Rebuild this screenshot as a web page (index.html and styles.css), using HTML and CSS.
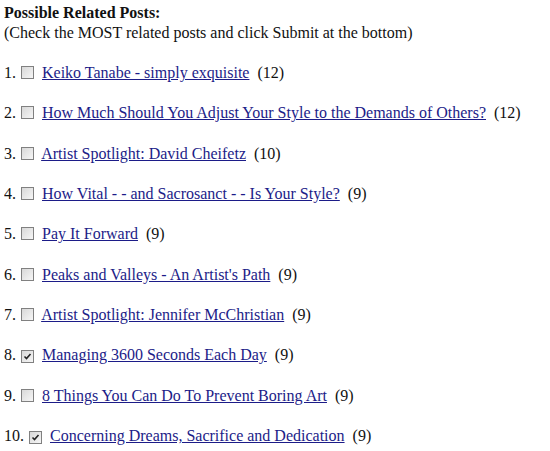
FILE: index.html
```html
<html>
<head>
<link rel="stylesheet" href="styles.css">
</head>
<body>

<div class="intro">
  <b>Possible Related Posts:</b><br />
  (Check the MOST related posts and click Submit at the bottom)
</div>

<div class="posts">
  <div class="post">1. <span class="box"></span> <a href="#">Keiko Tanabe - simply exquisite</a> <span class="count">(12)</span></div>
  <div class="post">2. <span class="box"></span> <a href="#">How Much Should You Adjust Your Style to the Demands of Others?</a> <span class="count">(12)</span></div>
  <div class="post">3. <span class="box"></span> <a href="#">Artist Spotlight: David Cheifetz</a> <span class="count">(10)</span></div>
  <div class="post">4. <span class="box"></span> <a href="#">How Vital - - and Sacrosanct - - Is Your Style?</a> <span class="count">(9)</span></div>
  <div class="post">5. <span class="box"></span> <a href="#">Pay It Forward</a> <span class="count">(9)</span></div>
  <div class="post">6. <span class="box"></span> <a href="#">Peaks and Valleys - An Artist's Path</a> <span class="count">(9)</span></div>
  <div class="post">7. <span class="box"></span> <a href="#">Artist Spotlight: Jennifer McChristian</a> <span class="count">(9)</span></div>
  <div class="post">8. <span class="box"><svg width="9" height="9" viewBox="0 0 9 9"><path d="M1.5 4.5 L3.5 6.5 L7.5 2" fill="none" stroke="#222" stroke-width="1.6"/></svg></span> <a href="#">Managing 3600 Seconds Each Day</a> <span class="count">(9)</span></div>
  <div class="post">9. <span class="box"></span> <a href="#">8 Things You Can Do To Prevent Boring Art</a> <span class="count">(9)</span></div>
  <div class="post">10. <span class="box"><svg width="9" height="9" viewBox="0 0 9 9"><path d="M1.5 4.5 L3.5 6.5 L7.5 2" fill="none" stroke="#222" stroke-width="1.6"/></svg></span> <a href="#">Concerning Dreams, Sacrifice and Dedication</a> <span class="count">(9)</span></div>
</div>

</body>
</html>
```

FILE: styles.css
```css
body {
	font-family: "Liberation Serif", "Times New Roman", serif;
	font-size: 16px;
	line-height: 20px;
	color: #111;
	background-color: #fff;
	margin: 3px 0 0 4px;
	}

.intro {
	margin-bottom: 20px;
}

.posts {
	display: flex;
	flex-direction: column;
	gap: 20.33px;
}

.post {
	white-space: nowrap;
}

.box {
	display: inline-flex;
	align-items: center;
	justify-content: center;
	box-sizing: border-box;
	width: 13px;
	height: 13px;
	border: 1px solid #808080;
	background: linear-gradient(135deg, #d8d8d8 0%, #f6f6f6 100%);
	vertical-align: -1px;
	margin: 0 4px 0 1px;
}

.count {
	margin-left: 4px;
}

a:link, a:visited {
	color: #1c1c88;
	text-decoration: underline;
}
```
